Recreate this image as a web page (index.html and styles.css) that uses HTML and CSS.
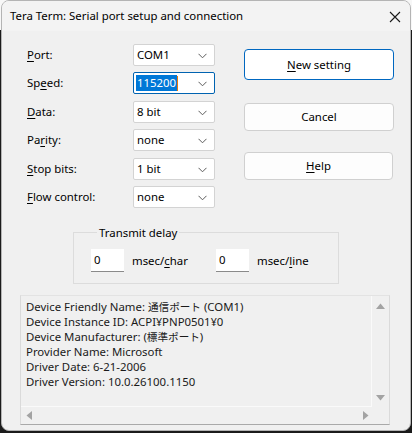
FILE: index.html
```html
<!DOCTYPE html>
<html lang="en">
<head>
<meta charset="utf-8">
<title>Tera Term: Serial port setup and connection</title>
<link rel="stylesheet" href="styles.css">
</head>
<body>
<div class="window">
  <div class="titlebar">
    <span class="title">Tera Term: Serial port setup and connection</span>
    <span class="close">
      <svg width="12" height="12" viewBox="0 0 12 12"><path d="M1 1L11 11M11 1L1 11" stroke="#1a1a1a" stroke-width="1.1" fill="none"/></svg>
    </span>
  </div>
  <div class="body">
    <div class="top">
      <div class="fields">
        <label class="lbl"><u>P</u>ort:</label>
        <div class="combo"><span class="val">COM1</span><svg class="chev" width="9" height="6" viewBox="0 0 9 6"><path d="M0.5 0.8L4.5 4.8L8.5 0.8" stroke="#5c5c5c" stroke-width="1" fill="none"/></svg></div>
        <label class="lbl">Sp<u>e</u>ed:</label>
        <div class="combo focus"><span class="val sel">115200</span><span class="caret"></span><svg class="chev" width="9" height="6" viewBox="0 0 9 6"><path d="M0.5 0.8L4.5 4.8L8.5 0.8" stroke="#5c5c5c" stroke-width="1" fill="none"/></svg></div>
        <label class="lbl"><u>D</u>ata:</label>
        <div class="combo"><span class="val">8 bit</span><svg class="chev" width="9" height="6" viewBox="0 0 9 6"><path d="M0.5 0.8L4.5 4.8L8.5 0.8" stroke="#5c5c5c" stroke-width="1" fill="none"/></svg></div>
        <label class="lbl">Pa<u>r</u>ity:</label>
        <div class="combo"><span class="val">none</span><svg class="chev" width="9" height="6" viewBox="0 0 9 6"><path d="M0.5 0.8L4.5 4.8L8.5 0.8" stroke="#5c5c5c" stroke-width="1" fill="none"/></svg></div>
        <label class="lbl"><u>S</u>top bits:</label>
        <div class="combo"><span class="val">1 bit</span><svg class="chev" width="9" height="6" viewBox="0 0 9 6"><path d="M0.5 0.8L4.5 4.8L8.5 0.8" stroke="#5c5c5c" stroke-width="1" fill="none"/></svg></div>
        <label class="lbl"><u>F</u>low control:</label>
        <div class="combo"><span class="val">none</span><svg class="chev" width="9" height="6" viewBox="0 0 9 6"><path d="M0.5 0.8L4.5 4.8L8.5 0.8" stroke="#5c5c5c" stroke-width="1" fill="none"/></svg></div>
      </div>
      <div class="buttons">
        <div class="btn default"><u>N</u>ew setting</div>
        <div class="btn cancel">Cancel</div>
        <div class="btn help"><u>H</u>elp</div>
      </div>
    </div>
    <fieldset class="group">
      <legend>Transmit delay</legend>
      <div class="delays">
        <div class="delay"><span class="edit">0</span><span>msec/<u>c</u>har</span></div>
        <div class="delay"><span class="edit">0</span><span>msec/<u>l</u>ine</span></div>
      </div>
    </fieldset>
    <div class="info">
      <div class="text">
        <div>Device Friendly Name: <span class="ja">通信ポート</span> (COM1)</div>
        <div>Device Instance ID: ACPI<span class="ja">¥</span>PNP0501<span class="ja">¥</span>0</div>
        <div>Device Manufacturer: (<span class="ja">標準ポート</span>)</div>
        <div>Provider Name: Microsoft</div>
        <div>Driver Date: 6-21-2006</div>
        <div>Driver Version: 10.0.26100.1150</div>
      </div>
      <div class="vscroll">
        <svg width="9" height="6" viewBox="0 0 9 6"><path d="M0 6L4.5 0.5L9 6Z" fill="#a3a3a3"/></svg>
        <svg width="9" height="6" viewBox="0 0 9 6"><path d="M0 0L4.5 5.5L9 0Z" fill="#a3a3a3"/></svg>
      </div>
      <div class="hscroll">
        <svg width="6" height="9" viewBox="0 0 6 9"><path d="M6 0L0.5 4.5L6 9Z" fill="#a3a3a3"/></svg>
        <svg width="6" height="9" viewBox="0 0 6 9"><path d="M0 0L5.5 4.5L0 9Z" fill="#a3a3a3"/></svg>
      </div>
      <div class="corner"></div>
    </div>
  </div>
</div>
</body>
</html>
```
FILE: styles.css
```css
* { box-sizing: border-box; }
html, body { margin: 0; padding: 0; }
body {
  width: 412px;
  height: 433px;
  overflow: hidden;
  background: linear-gradient(#f7f7f7 0, #f7f7f7 30px, #1b1b1b 30px);
  font-family: "Noto Sans", "Noto Sans CJK JP", sans-serif;
  font-size: 11.4px;
  color: #000;
}
u { text-decoration: underline; text-underline-offset: 2px; }
.window {
  margin-left: 1px;
  width: 410px;
  height: 431px;
  background: #f0f0f0;
  border: 1px solid #b4b4b4;
  border-radius: 8px;
  overflow: hidden;
}
.titlebar {
  height: 30px;
  background: #f3f3f3;
  display: flex;
  align-items: center;
  justify-content: space-between;
  padding: 0 8px 0 8px;
}
.title { line-height: 16px; color: #000; }
.close { display: flex; width: 12px; height: 12px; margin-right: 1px; margin-top: 1px; }
.body { padding-top: 13px; }
.top { display: flex; }
.fields {
  margin-left: 25px;
  display: grid;
  grid-template-columns: 106px 82px;
  grid-auto-rows: 22px;
  row-gap: 6.4px;
}
.lbl { display: flex; align-items: center; line-height: 16px; }
.combo {
  position: relative;
  background: #fff;
  border: 1px solid #d3d3d3;
  border-radius: 2px;
  display: flex;
  align-items: center;
  padding-left: 2px;
}
.combo.focus { border-color: #0063b1; }
.val { line-height: 16px; padding: 0 1px; }
.val.sel { background: #0078d7; color: #fff; }
.caret { width: 1px; height: 15px; background: #e8780b; }
.chev { position: absolute; right: 7px; top: 8px; }
.buttons {
  margin-left: 29px;
  margin-top: 5px;
  width: 150px;
  display: flex;
  flex-direction: column;
}
.btn {
  background: #fdfdfd;
  border: 1px solid #d0d0d0;
  border-radius: 4px;
  display: flex;
  align-items: center;
  justify-content: center;
  line-height: 16px;
}
.btn.default { height: 31px; border-color: #0067c0; background: #fff; }
.btn.cancel { height: 28px; margin-top: 23px; }
.btn.help { height: 28px; margin-top: 21px; width: 149px; }
.group {
  margin: 17px 0 0 71px;
  width: 266px;
  border: 1px solid #dcdcdc;
  padding: 8px 0 11px 17px;
  min-width: 0;
}
.group legend { padding: 0 2px; margin-left: 6px; line-height: 16px; }
.delays { display: grid; grid-template-columns: 125px auto; }
.delay { display: flex; align-items: center; gap: 8px; }
.edit {
  width: 33px;
  height: 23px;
  background: #fff;
  border-bottom: 1px solid #8a8a8a;
  padding-left: 3px;
  display: flex;
  align-items: center;
  line-height: 16px;
}
.info {
  margin: 11px 0 0 18px;
  width: 370px;
  height: 130px;
  border-top: 1px solid #e3e3e3;
  border-left: 1px solid #dadada;
  border-right: 1px solid #dadada;
  border-bottom: 1px solid #a9a9a9;
  display: grid;
  grid-template-columns: 1fr 17px;
  grid-template-rows: 1fr 17px;
}
.text {
  padding: 3px 0 0 5px;
  line-height: 15px;
  color: #1a1a1a;
  border-right: 1px solid #fafafa;
  border-bottom: 1px solid #fafafa;
  white-space: nowrap;
  overflow: hidden;
}
.text > div { height: 15px; }
.ja { font-size: 10.6px; line-height: 1; }
.vscroll {
  display: flex;
  flex-direction: column;
  justify-content: space-between;
  align-items: center;
  padding: 7px 0 6px 0;
}
.hscroll {
  display: flex;
  justify-content: space-between;
  align-items: center;
  padding: 0 3px 0 5px;
}
```
